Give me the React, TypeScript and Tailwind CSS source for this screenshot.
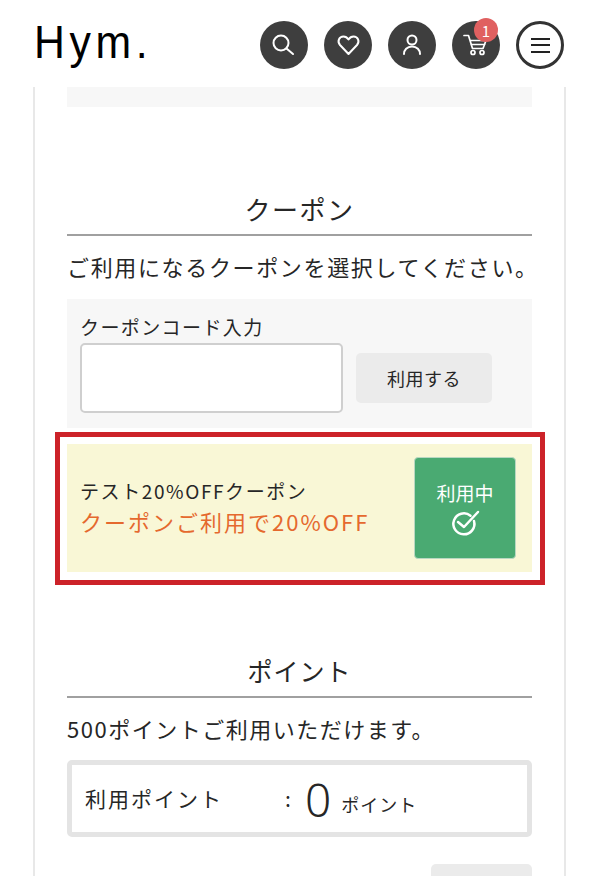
const jpFont = "font-['Noto_Sans_CJK_JP','Noto_Sans',sans-serif]";

function SearchIcon() {
  return (
    <svg width="48" height="48" viewBox="0 0 48 48" fill="none" stroke="white" strokeWidth="2" strokeLinecap="round">
      <circle cx="21" cy="22" r="7.5" />
      <path d="M26.5 27.5L33 33" />
    </svg>
  );
}

function HeartIcon() {
  return (
    <svg width="48" height="48" viewBox="0 0 48 48" fill="none" stroke="white" strokeWidth="2" strokeLinejoin="round">
      <path d="M24.5 33L16 24C13 20.5 15 15.5 19.5 15.5C22 15.5 23.5 17 24.5 18.5C25.5 17 27 15.5 29.5 15.5C34 15.5 36 20.5 33 24Z" />
    </svg>
  );
}

function UserIcon() {
  return (
    <svg width="48" height="48" viewBox="0 0 48 48" fill="none" stroke="white" strokeWidth="2" strokeLinecap="round">
      <circle cx="24" cy="19" r="4.5" />
      <path d="M16 33c0-4 3-7.5 8-7.5s8 3.5 8 7.5" />
    </svg>
  );
}

function CartIcon() {
  return (
    <svg width="48" height="48" viewBox="0 0 48 48" fill="none" stroke="white" strokeWidth="1.7" strokeLinejoin="round" strokeLinecap="round">
      <path d="M12 14.5h4.5L20.5 27.5h10.5l3-8H18" />
      <path d="M19.5 23.5h13" />
      <circle cx="21" cy="31.5" r="2" />
      <circle cx="30" cy="31.5" r="2" />
    </svg>
  );
}

function CircleButton({ children }: { children: React.ReactNode }) {
  return (
    <button className="relative flex h-12 w-12 items-center justify-center rounded-full bg-[#3e3e3e] text-white">
      {children}
    </button>
  );
}

export default function App() {
  return (
    <div className={`h-screen overflow-hidden bg-white text-[#262626] ${jpFont}`}>
      {/* Header */}
      <header className="flex h-[87px] items-start justify-between pl-[34px] pr-[36px] pt-[21px]">
        <h1 className="-mt-[2px] origin-left scale-x-[0.93] font-['Liberation_Sans',sans-serif] text-[46px] leading-[46px] tracking-[5px] text-black">Hym.</h1>
        <div className="flex gap-4">
          <CircleButton>
            <SearchIcon />
          </CircleButton>
          <CircleButton>
            <HeartIcon />
          </CircleButton>
          <CircleButton>
            <UserIcon />
          </CircleButton>
          <CircleButton>
            <CartIcon />
            <span className="absolute -top-[3px] left-[22px] flex h-6 w-6 items-center justify-center rounded-full bg-[#e06060] text-[15px] leading-none text-white">
              1
            </span>
          </CircleButton>
          <button className="flex h-12 w-12 flex-col items-center justify-center gap-[4.5px] rounded-full border-[3px] border-[#333] bg-white">
            <span className="h-[2px] w-[19px] bg-[#222]" />
            <span className="h-[2px] w-[19px] bg-[#222]" />
            <span className="h-[2px] w-[19px] bg-[#222]" />
          </button>
        </div>
      </header>

      {/* Main */}
      <main className="ml-[33px] mr-[34px] h-[789px] border-x-2 border-[#e8e8e8] px-[32px]">
        <div className="h-5 bg-[#f7f7f7]" />

        {/* Coupon */}
        <section className="pt-[83px]">
          <h2 className="border-b-2 border-[#a0a0a0] pb-[6px] text-center text-[26px] leading-[38px] tracking-[1.5px]">クーポン</h2>
          <p className="mt-[12px] text-[22px] leading-[36px] tracking-[1.65px] whitespace-nowrap">ご利用になるクーポンを選択してください。</p>
          <div className="mt-[15px] h-[129px] bg-[#f7f7f7] px-[13px] pt-[12px]">
            <label className="block text-[19px] leading-[32px] tracking-[1.4px]">クーポンコード入力</label>
            <div className="flex items-center gap-[13px]">
              <input className="h-[70px] w-[263px] rounded-[5px] border-2 border-[#cfcfcf] bg-white" />
              <button className="h-[50px] w-[136px] rounded-[5px] bg-[#ebebeb] text-[18px] tracking-[0.5px]">利用する</button>
            </div>
          </div>

          <div className="relative mt-4 flex h-[128px] items-center justify-between bg-[#f9f7d6] pl-[13px] pr-[16px]">
            <div className="pb-[4px]">
              <p className="text-[19px] leading-[31px] tracking-[1.6px]">テスト20%OFFクーポン</p>
              <p className="text-[22px] leading-[31px] tracking-[2px] text-[#e5692e]">クーポンご利用で20%OFF</p>
            </div>
            <button className="flex h-[102px] w-[102px] flex-col items-center justify-center rounded-[4px] border border-[#b9d8c2] bg-[#4aaa72] text-white">
              <span className="text-[19px] leading-[28px]">利用中</span>
              <svg className="mt-[2px]" width="30" height="28" viewBox="0 0 30 28" fill="none" stroke="white" strokeWidth="2.5" strokeLinecap="round" strokeLinejoin="round">
                <path d="M20.5 6.7A10.5 10.5 0 1 0 24 12" />
                <path d="M8 13l6 5L28 3" />
              </svg>
            </button>
            {/* Highlight frame over the coupon */}
            <div className="absolute -bottom-[13px] -left-[12px] -right-[13px] -top-[12px] border-[5px] border-[#cc2229]" />
          </div>
        </section>

        {/* Points */}
        <section className="pt-[80px]">
          <h2 className="border-b-2 border-[#a0a0a0] pb-[8px] text-center text-[25px] leading-[36px] tracking-[1px]">ポイント</h2>
          <p className="mt-[12px] text-[22px] leading-[36px] tracking-[1.5px] whitespace-nowrap">500ポイントご利用いただけます。</p>
          <div className="mt-[14px] flex h-[77px] items-center rounded-[5px] border-[5px] border-[#e4e4e4] pl-[13px]">
            <span className="w-[200px] text-[21px] tracking-[2px]">利用ポイント</span>
            <span className="w-[20px] text-[21px]">:</span>
            <span className="font-['Noto_Sans',sans-serif] text-[46px] leading-none font-light">0</span>
            <span className="ml-[10px] mt-[12px] text-[18px] tracking-[1px]">ポイント</span>
          </div>
          <div className="mt-[27px] flex justify-end">
            <button className="h-[50px] w-[101px] rounded-[5px] bg-[#ebebeb]" />
          </div>
        </section>
      </main>
    </div>
  );
}
